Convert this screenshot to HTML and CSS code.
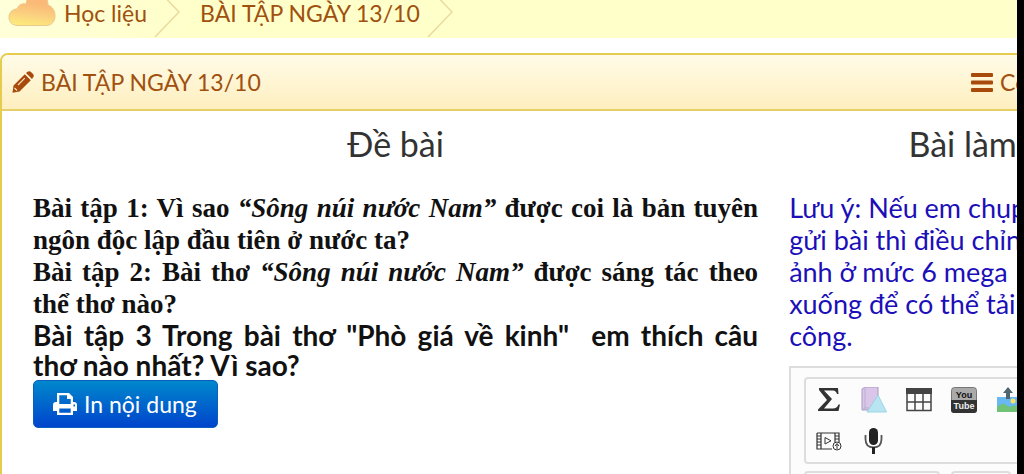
FILE: index.html
```html
<!DOCTYPE html>
<html lang="vi">
<head>
<meta charset="utf-8">
<meta name="viewport" content="width=device-width, initial-scale=1">
<title>BÀI TẬP NGÀY 13/10</title>
<link rel="stylesheet" href="styles.css">
</head>
<body>
<div class="screen">
  <nav class="crumbs" aria-label="Đường dẫn">
    <a class="crumb crumb-home" href="#">
      <svg class="cloud" viewBox="0 0 48 38" aria-hidden="true">
        <defs><linearGradient id="cloudFill" x1="0.6" y1="0" x2="0.4" y2="1"><stop offset="0.3" stop-color="#fbb877"/><stop offset="0.65" stop-color="#fbcf80"/><stop offset="1" stop-color="#fdea7c"/></linearGradient></defs>
        <path d="M10 31.500C4 31.500 1 27.500 1 23.500C1 19 4 15 9 15C10 11 14 9 18 10C19 5 20 0 27 -1C35 -1 40 3 40 11C45 13 47 17 47 22C47 28 43 31.500 38 31.500Z" fill="url(#cloudFill)" stroke="#e9c98e"/>
      </svg>
      <span>Học liệu</span>
    </a>
    <svg class="chevron" viewBox="0 0 26 50" aria-hidden="true"><path d="M1 0L25 25L1 50" fill="none" stroke="#ead9a0" stroke-width="1.500"/></svg>
    <a class="crumb" href="#">BÀI TẬP NGÀY 13/10</a>
    <svg class="chevron" viewBox="0 0 26 50" aria-hidden="true"><path d="M1 0L25 25L1 50" fill="none" stroke="#ead9a0" stroke-width="1.500"/></svg>
  </nav>

  <main class="panel">
    <header class="panel-head">
      <h1 class="panel-title">
        <svg class="pencil" viewBox="0 0 22 22" aria-hidden="true"><path fill="#a84a0c" d="M14 2L15.500 .8Q17.500-.5 19 1L21 3Q22.500 4.700 21 6.500L20 8ZM12.800 3.200L18.800 9.200L7.500 20.500L0.500 21.800L1.500 14.500Z"/><path d="M2.500 17L5 19.500M6 14L12.800 7.200" fill="none" stroke="#fbe9c8" stroke-width="1.100"/></svg>
        <span>BÀI TẬP NGÀY 13/10</span>
      </h1>
      <button class="menu" type="button">
        <svg class="bars" viewBox="0 0 22 19" aria-hidden="true"><path fill="#a84a0c" d="M1 0H21Q22 0 22 1V3Q22 4 21 4H1Q0 4 0 3V1Q0 0 1 0ZM1 7.500H21Q22 7.500 22 8.500V10.500Q22 11.500 21 11.500H1Q0 11.500 0 10.500V8.500Q0 7.500 1 7.500ZM1 15H21Q22 15 22 16V18Q22 19 21 19H1Q0 19 0 18V16Q0 15 1 15Z"/></svg>
        <span>Co</span>
      </button>
    </header>

    <div class="columns">
      <section class="task">
        <h2 class="heading">Đề bài</h2>
        <div class="task-text">
          <p class="serif">Bài tập 1: Vì sao <em>“Sông núi nước Nam”</em> được coi là bản tuyên ngôn độc lập đầu tiên ở nước ta?</p>
          <p class="serif">Bài tập 2: Bài thơ <em>“Sông núi nước Nam”</em> được sáng tác theo thể thơ nào?</p>
          <p class="sans">Bài tập 3 Trong bài thơ "Phò giá về kinh"&nbsp; em thích câu thơ&nbsp;nào nhất? Vì sao?</p>
        </div>
        <button class="print" type="button">
          <svg class="printer" viewBox="0 0 24 22" aria-hidden="true"><path fill="#fff" fill-rule="evenodd" d="M4 0H16L20 4V9H21Q24 9 24 12V18H20V22H4V18H0V12Q0 9 3 9H4ZM6.300 2.200V11H17.700V6H14V2.200ZM6.300 15.500V19.700H17.700V15.500ZM20.500 11.500V13.500H22V11.500Z"/></svg>
          <span>In nội dung</span>
        </button>
      </section>

      <section class="answer">
        <h2 class="heading">Bài làm</h2>
        <p class="note">Lưu ý: Nếu em chụp<br>gửi bài thì điều chỉn<br>ảnh ở mức 6 mega<br>xuống để có thể tải<br>công.</p>
        <div class="editor">
          <div class="tools">
            <button class="tool" type="button" aria-label="Công thức"><svg viewBox="0 0 26 26"><path fill="#333" d="M3 1H22L22.500 7H21Q20 3.500 17 3.500H8L16 12L8 21.500H17Q21 21.500 22.500 17.500H24L22.500 24H2V22.500L11 13L3 3Z"/></svg></button>
            <button class="tool" type="button" aria-label="Hình vẽ"><svg viewBox="0 0 26 26"><path d="M1 2L4 0H17V21L14 23H1Z" fill="#d9c6e8" stroke="#a99bc5"/><path d="M4 0V21H17M4 21L1 23" fill="none" stroke="#bbaed2"/><path d="M17 8L6 25H25.500Z" fill="#b9e5f2" stroke="#9bd3e3"/></svg></button>
            <button class="tool" type="button" aria-label="Bảng"><svg viewBox="0 0 26 26"><path fill="#444" d="M0 1H26V7H0Z"/><path d="M1 6V23.500H25V6M1 15H25M9 6V24M17 6V24" fill="none" stroke="#444" stroke-width="1.500"/></svg></button>
            <button class="tool" type="button" aria-label="YouTube"><svg viewBox="0 0 26 26"><rect x=".5" y=".5" width="25" height="25" rx="3" fill="#aaa" stroke="#777"/><path d="M0 13H26V23Q26 26 23 26H3Q0 26 0 23Z" fill="#333"/><text class="yt yt-top" x="13" y="11">You</text><text class="yt yt-low" x="13" y="22">Tube</text></svg></button>
            <button class="tool" type="button" aria-label="Ảnh"><svg viewBox="0 0 26 26"><rect x="1" y="10" width="24" height="15" fill="#69b8f2"/><circle cx="17" cy="14" r="2.500" fill="#f7e56b"/><path d="M1 20Q7 14 13 20Q19 17 25 21V25H1Z" fill="#6fc276"/><path d="M12 0L17 6H14V12H10V6H7Z" fill="#4d6570"/></svg></button>
            <button class="tool" type="button" aria-label="Video"><svg viewBox="0 0 26 26"><path d="M1 5H23V14M1 5V21H16M5 5V21M19 5V14" fill="none" stroke="#333" stroke-width="1.200"/><path d="M1 8H5M1 11H5M1 14H5M1 17H5M19 8H23M19 11H23" stroke="#333" stroke-width="1.200"/><path d="M9 9.500V16L15 12.800Z" fill="none" stroke="#333"/><circle cx="21" cy="18" r="4" fill="#fff" stroke="#333"/><path d="M21 21V16M19 18L21 15.500L23 18" fill="none" stroke="#333"/></svg></button>
            <button class="tool" type="button" aria-label="Ghi âm"><svg viewBox="0 0 26 26"><rect x="8" y="0" width="9" height="17" rx="4.500" fill="#222"/><path d="M4.500 7V11Q4.500 19.500 12.500 19.500Q20.500 19.500 20.500 11V7" fill="none" stroke="#555" stroke-width="1.800"/><path d="M12.500 19V26" stroke="#222" stroke-width="3"/></svg></button>
          </div>
          <div class="tool-row"><div class="group group-wide"></div><div class="group"></div></div>
        </div>
      </section>
    </div>
  </main>
</div>
</body>
</html>
```
FILE: styles.css
```css
* { box-sizing: border-box; }
body {
  margin: 0;
  background: #fff;
  font-family: Lato, "Noto Sans", sans-serif;
  font-size: 23px;
  line-height: 32px;
  color: #a0500f;
}
h1, h2, p { margin: 0; font-weight: inherit; }
button { margin: 0; padding: 0; border: 0; background: none; font: inherit; color: inherit; }
svg { display: block; flex: none; }

.screen { height: 100vh; overflow: hidden; border-right: 7px solid #000; }

.crumbs {
  display: flex;
  align-items: center;
  height: 38px;
  padding-left: 8px;
  overflow: hidden;
  background: linear-gradient(90deg, #ffffd9, #ffffc9 20%);
  white-space: nowrap;
}
.crumb { display: flex; align-items: center; gap: 8px; padding-bottom: 12px; color: inherit; text-decoration: none; }
.cloud { width: 48px; height: 38px; }
.chevron { width: 26px; height: 50px; margin: 0 20px 14px 7px; }

.panel { width: 113%; margin-top: 15px; border: 2px solid #e6cc4e; border-radius: 8px 8px 0 0; }
.panel-head {
  display: flex;
  align-items: center;
  justify-content: space-between;
  height: 56px;
  padding: 0 119px 0 10px;
  border-bottom: 2px solid #e6cf68;
  border-radius: 6px 6px 0 0;
  background: linear-gradient(#fffbe8, #feefbf);
}
.panel-title { display: flex; align-items: center; gap: 7px; font-size: 23px; line-height: 32px; }
.pencil { width: 22px; height: 22px; }
.menu { display: flex; align-items: center; gap: 7px; }
.bars { width: 22px; height: 19px; }

.columns { display: grid; grid-template-columns: minmax(0, 725fr) minmax(0, 347fr); gap: 31px; padding: 11px 11px 0 31px; }
.heading { margin-bottom: 26px; font-size: 34px; line-height: 44px; text-align: center; color: #333; }

.task-text { color: #111; text-align: justify; font-weight: 700; }
.serif { font-family: "Liberation Serif", serif; font-size: 27px; }
.sans { font-size: 28px; line-height: 30px; }
.print {
  display: flex;
  align-items: center;
  gap: 7px;
  height: 48px;
  padding: 0 20px 0 19px;
  border: 1px solid #0a5ec0;
  border-radius: 5px;
  background: linear-gradient(#0088cc, #0044cc);
  color: #fff;
}
.printer { width: 24px; height: 22px; }

.note { color: #1c0fb8; font-size: 27px; white-space: nowrap; }
.editor { margin-top: 14px; padding: 9px 13px; border: 2px solid #ddd; background: #fcfcfc; height: 160px; }
.tools { display: grid; grid-template-columns: repeat(5, 26px); gap: 15px 19px; padding: 8px 10px; border: 2px solid #ddd; border-radius: 4px; }
.tool, .tool svg { width: 26px; height: 26px; }
.yt { font-family: "Liberation Sans", sans-serif; font-size: 9px; font-weight: 700; text-anchor: middle; }
.yt-top { fill: #111; }
.yt-low { fill: #eee; }
.tool-row { display: flex; gap: 11px; margin-top: 7px; }
.group { width: 60px; height: 40px; border: 2px solid #ddd; border-radius: 4px; }
.group-wide { width: 136px; }
```
